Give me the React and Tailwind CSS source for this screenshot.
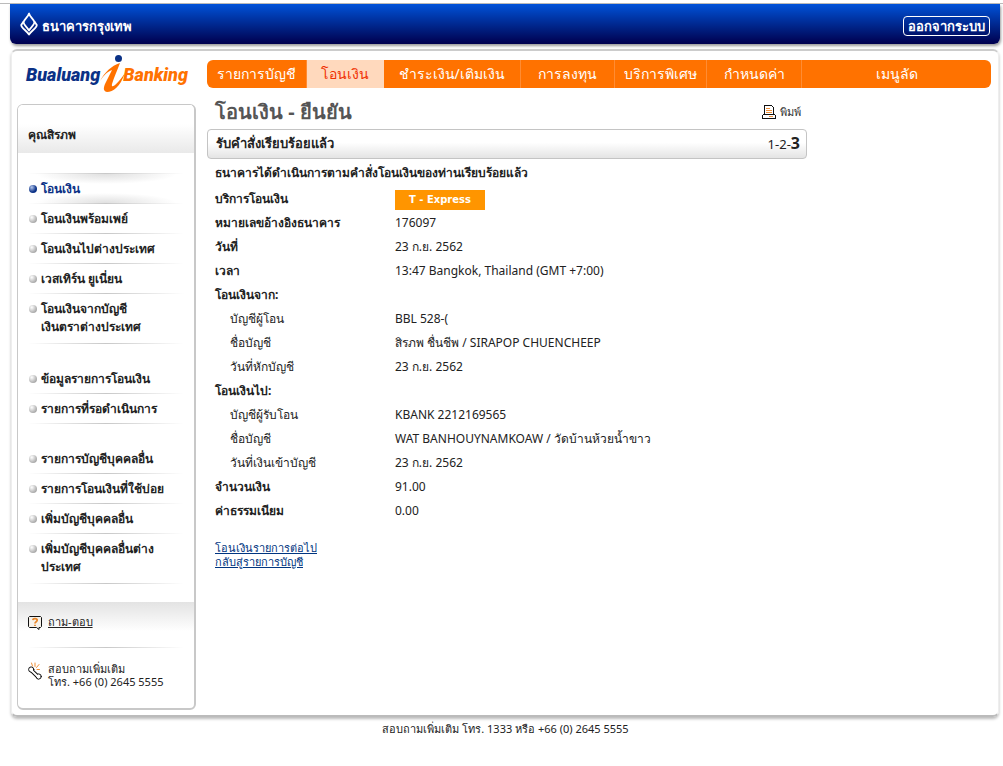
import clsx from 'clsx';

const NAV_TABS = [
  { label: 'รายการบัญชี', grow: 'flex-[100]' },
  { label: 'โอนเงิน', grow: 'flex-[76]', active: true },
  { label: 'ชำระเงิน/เติมเงิน', grow: 'flex-[137]' },
  { label: 'การลงทุน', grow: 'flex-[94]' },
  { label: 'บริการพิเศษ', grow: 'flex-[92]' },
  { label: 'กำหนดค่า', grow: 'flex-[95]' },
  { label: 'เมนูลัด', grow: 'flex-[190]' },
];

const MENU_GROUPS = [
  [
    { lines: ['โอนเงิน'], active: true },
    { lines: ['โอนเงินพร้อมเพย์'] },
    { lines: ['โอนเงินไปต่างประเทศ'] },
    { lines: ['เวสเทิร์น ยูเนี่ยน'] },
    { lines: ['โอนเงินจากบัญชี', 'เงินตราต่างประเทศ'] },
  ],
  [{ lines: ['ข้อมูลรายการโอนเงิน'] }, { lines: ['รายการที่รอดำเนินการ'] }],
  [
    { lines: ['รายการบัญชีบุคคลอื่น'] },
    { lines: ['รายการโอนเงินที่ใช้บ่อย'] },
    { lines: ['เพิ่มบัญชีบุคคลอื่น'] },
    { lines: ['เพิ่มบัญชีบุคคลอื่นต่าง', 'ประเทศ'] },
  ],
];

const DETAILS = [
  { label: 'บริการโอนเงิน', badge: 'T - Express' },
  { label: 'หมายเลขอ้างอิงธนาคาร', value: '176097' },
  { label: 'วันที่', value: '23 ก.ย. 2562' },
  { label: 'เวลา', value: '13:47 Bangkok, Thailand (GMT +7:00)' },
  { label: 'โอนเงินจาก:' },
  { label: 'บัญชีผู้โอน', value: 'BBL 528-(', sub: true },
  { label: 'ชื่อบัญชี', value: 'สิรภพ ชื่นชีพ / SIRAPOP CHUENCHEEP', sub: true },
  { label: 'วันที่หักบัญชี', value: '23 ก.ย. 2562', sub: true },
  { label: 'โอนเงินไป:' },
  { label: 'บัญชีผู้รับโอน', value: 'KBANK 2212169565', sub: true },
  { label: 'ชื่อบัญชี', value: 'WAT BANHOUYNAMKOAW / วัดบ้านห้วยน้ำขาว', sub: true },
  { label: 'วันที่เงินเข้าบัญชี', value: '23 ก.ย. 2562', sub: true },
  { label: 'จำนวนเงิน', value: '91.00' },
  { label: 'ค่าธรรมเนียม', value: '0.00' },
];

const LotusIcon = () => (
  <svg width="18" height="24" viewBox="0 0 18 24" fill="none" stroke="#fff" strokeWidth="1.800" strokeLinejoin="round">
    <path d="M9 1.500C8 5 4.500 7 3.600 10C3.200 12.500 6.500 14.500 9 18.500C11.500 14.500 14.800 12.500 14.400 10C13.500 7 10 5 9 1.500Z" />
    <path d="M3.600 9.500L1.200 13C1.200 16 6.500 18.500 9 22.500C11.500 18.500 16.800 16 16.800 13L14.400 9.500" />
  </svg>
);

const PrintIcon = () => (
  <svg width="14" height="14" viewBox="0 0 14 14" shapeRendering="crispEdges">
    <path d="M2.500 .5H9.500L11.500 2.500V9.500H2.500Z" fill="#fff" stroke="#111" />
    <path d="M4 3.500H8M4 5.500H10M4 7.500H10" stroke="#f0913a" />
    <path d="M1.500 9.500H12.500L13.500 10.500V13.500H.5V10.500Z" fill="#fff" stroke="#111" />
    <path d="M7 11.500H11" stroke="#f0913a" />
  </svg>
);

const FaqIcon = () => (
  <svg width="14" height="14" viewBox="0 0 14 14">
    <path d="M1.500 .5H12.500L13.500 1.500V10.500L12.500 11.500H11V13.500L8.500 11.500H1.500L.5 10.500V1.500Z" fill="#f5f1ea" stroke="#111" />
    <path d="M4.800 4.200C5 2 9.200 2.200 9.200 4.300C9.200 5.800 7 5.600 7 7.500M7 8.700V10" fill="none" stroke="#e8872b" strokeWidth="1.800" />
  </svg>
);

const PhoneIcon = () => (
  <svg width="14" height="18" viewBox="0 0 14 18" fill="none" strokeLinecap="round">
    <path d="M4.500 4L3.500 1M7 4.500V1M8.500 5.500L11 2.500M9 7.500H11.500" stroke="#f0913a" />
    <path d="M3 8L10.500 15.200" stroke="#111" strokeWidth="4" />
    <circle cx="3.200" cy="7.500" r="2.600" fill="#fff" stroke="#111" />
    <circle cx="10.700" cy="14.500" r="2.600" fill="#fff" stroke="#111" />
    <path d="M3 8L10.500 15.200" stroke="#fff" strokeWidth="2" />
  </svg>
);

const BrandLogo = () => (
  <a href="#" className="relative flex h-9 w-[162px] items-center justify-between font-['Liberation_Sans_Narrow','Roboto',sans-serif] text-lg leading-9 font-black italic">
    <span className="pt-1 text-[#0b3186]">Bualuang</span>
    <span className="pt-1 text-[#ff7200]">Banking</span>
    <svg className="absolute top-0 left-[73px]" width="30" height="38" viewBox="0 0 30 38">
      <circle cx="19.500" cy="3.500" r="3.500" fill="#0b3186" />
      <path d="M1 26C6 17 12 11 21 8C18 16 15 22 13 29C12 34 17 31 26 18C21 32 14 37 8 37C3 36 5 31 7 27C9 23 11 19 13 15C8 17 5 20 1 26Z" fill="#ff7200" />
    </svg>
  </a>
);

const Divider = () => <div className="h-px bg-linear-to-r from-white via-[#c8c8c8] to-white" />;

const MenuItem = ({ lines, active }) => (
  <li>
    {active && <Divider />}
    <a
      href="#"
      className={clsx(
        'flex gap-1 pl-px text-xs leading-[18px] font-bold',
        lines.length > 1 ? 'pt-1.5 pb-[7px]' : 'pt-1.5 pb-[5px]',
        active
          ? 'bg-[radial-gradient(70px_10px_at_top,#e0e0e0,transparent),radial-gradient(70px_10px_at_bottom,#e0e0e0,transparent)] text-[#0b3186]'
          : 'text-[#222]'
      )}
    >
      <span
        className={clsx(
          'mt-[5px] size-2 shrink-0 rounded-full bg-radial-[at_35%_30%]',
          active ? 'from-[#b5c8ee] to-[#0b3186] to-60%' : 'from-white to-[#888]'
        )}
      />
      <span className="whitespace-nowrap">
        {lines.map((line) => (
          <span key={line} className="block">{line}</span>
        ))}
      </span>
    </a>
    <Divider />
  </li>
);

const Sidebar = () => (
  <aside className="w-[179px] shrink-0 overflow-hidden rounded-md border border-r-2 border-b-2 border-[#c8c8c8] bg-white">
    <div className="h-12 bg-linear-to-b from-white from-40% to-[#e9e9e9] px-2.5 pt-5 text-xs leading-5 font-bold">คุณสิรภพ</div>
    <nav className="flex flex-col gap-5 px-2.5 pt-5 pb-[18px]">
      {MENU_GROUPS.map((group) => (
        <ul key={group[0].lines[0]}>
          {group.map((item) => (
            <MenuItem key={item.lines[0]} {...item} />
          ))}
        </ul>
      ))}
    </nav>
    <div className="flex h-[45px] items-center gap-1.5 bg-linear-to-b from-[#e3e3e3] to-white to-65% px-2.5 pb-1">
      <FaqIcon />
      <a href="#" className="text-[11px] underline">ถาม-ตอบ</a>
    </div>
    <div className="px-2.5">
      <Divider />
      <div className="flex gap-1.5 pt-3.5 pb-5 text-[11px] leading-[13px]">
        <PhoneIcon />
        <p className="whitespace-nowrap">
          สอบถามเพิ่มเติม
          <br />
          โทร. +66 (0) 2645 5555
        </p>
      </div>
    </div>
  </aside>
);

const DetailTable = () => (
  <table className="w-full text-left text-xs">
    <tbody>
      {DETAILS.map(({ label, value, badge, sub }, i) => (
        <tr key={i} className="h-6">
          <th scope="row" className={clsx('w-[180px] leading-6', sub ? 'pl-[15px] font-normal' : 'font-bold')}>{label}</th>
          <td className="leading-6">
            {badge ? (
              <span className="mt-0.5 block h-5 w-[90px] bg-[#ff9500] text-center font-['DejaVu_Sans',sans-serif] text-[10px] leading-5 font-bold text-white">{badge}</span>
            ) : (
              value
            )}
          </td>
        </tr>
      ))}
    </tbody>
  </table>
);

const App = () => (
  <div className="mt-[3px] border-t border-[#bbb] bg-white font-['Noto_Sans','DejaVu_Sans_Condensed',sans-serif] text-xs text-[#222]">
    <header className="mr-[3px] ml-2.5 flex h-10 items-center justify-between rounded-b-md bg-linear-to-b from-[#0052d9] to-[#00004f] px-2.5 text-white shadow-[1px_2px_3px_#999]">
      <a href="#" className="flex items-center gap-1 text-[13px] leading-5 font-bold">
        <LotusIcon />
        <span className="pt-1">ธนาคารกรุงเทพ</span>
      </a>
      <button type="button" className="mt-1 h-5 rounded border border-white px-1 text-[13px] leading-[18px] font-bold">ออกจากระบบ</button>
    </header>

    <div className="mt-[5px] mr-1 ml-[11px] rounded-md border-t-2 border-r border-b-2 border-l border-t-[#ccc] border-r-[#eee] border-b-[#bbb] border-l-[#eee] pr-[7px] pb-[5px] pl-[5px] shadow-[0_2px_3px_#bbb]">
      <div className="flex h-[53px] items-start">
        <div className="w-[190px] shrink-0 pt-1 pl-[9px]">
          <BrandLogo />
        </div>
        <nav className="mt-[9px] flex h-7 flex-1 overflow-hidden rounded-md bg-[#ff7200] text-sm">
          {NAV_TABS.map(({ label, grow, active }) => (
            <a
              key={label}
              href="#"
              className={clsx(
                'min-w-0 border-r text-center leading-7 whitespace-nowrap last:border-r-0',
                grow,
                active ? 'border-[#ffd9bd] bg-[#ffd9bd] text-[#f03000]' : 'border-[#ff8c33] text-white'
              )}
            >
              {label}
            </a>
          ))}
        </nav>
      </div>

      <div className="flex gap-[11px]">
        <Sidebar />
        <main className="max-w-[600px] flex-1">
          <div className="flex h-[25px] items-start justify-between pr-1.5 pl-2">
            <h1 className="-mt-1 text-xl leading-6 font-bold text-[#555]">โอนเงิน - ยืนยัน</h1>
            <button type="button" className="flex items-center gap-1 text-[11px] leading-4 text-[#333]">
              <PrintIcon />
              พิมพ์
            </button>
          </div>
          <div className="flex h-[30px] items-center justify-between rounded border border-[#c4c4c4] bg-linear-to-b from-white from-45% to-[#e4e4e4] pr-1.5 pl-2">
            <h2 className="text-[13px] font-bold">รับคำสั่งเรียบร้อยแล้ว</h2>
            <span className="pb-0.5 text-[13px]">
              1-2-<b className="text-base">3</b>
            </span>
          </div>
          <div className="pl-2">
            <p className="h-7 text-xs leading-7 font-bold">ธนาคารได้ดำเนินการตามคำสั่งโอนเงินของท่านเรียบร้อยแล้ว</p>
            <DetailTable />
            <div className="flex flex-col items-start pt-[18px] text-[11px] leading-[14px] text-[#003580] underline">
              <a href="#">โอนเงินรายการต่อไป</a>
              <a href="#">กลับสู่รายการบัญชี</a>
            </div>
          </div>
        </main>
      </div>
    </div>

    <footer className="pt-1 pl-2 text-center text-[11px] leading-4">สอบถามเพิ่มเติม โทร. 1333 หรือ +66 (0) 2645 5555</footer>
  </div>
);

export default App;
